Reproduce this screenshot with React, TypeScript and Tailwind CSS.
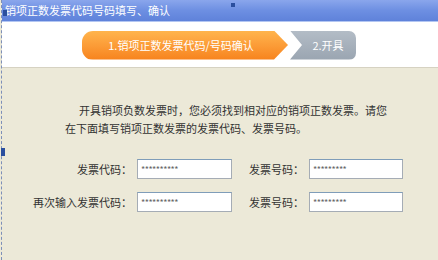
const font = { fontFamily: '"Noto Sans CJK SC", "Noto Sans", sans-serif' };

const Field = ({ label, value, labelW, inputW }: { label: string; value: string; labelW: string; inputW: string }) => (
  <div className="flex flex-row items-center">
    <label className={`${labelW} text-right text-[11px] text-[#333]`}>{label}</label>
    <div
      className={`${inputW} ml-[5px] h-[20px] bg-white border border-[#a5acb5] border-t-[#7f9db9] flex items-center pl-[3px] text-[9px] leading-none text-[#666] tracking-[-0.5px]`}
    >
      {value}
    </div>
  </div>
);

export default function App() {
  return (
    <div className="w-[438px] h-[260px] overflow-hidden bg-[#ece9d8]" style={font}>
      <div className="h-full ml-[1px] border-l border-dashed border-[#7d8fb8] flex flex-col">
        {/* title bar */}
        <div className="h-[22px] flex items-center pl-[3px] bg-gradient-to-b from-[#8aa6ec] via-[#6d8fe2] to-[#5f82da] border-b border-[#b3c6f2] relative">
          <span className="absolute left-[1px] top-[10px] w-[4px] h-[6px] bg-[#2b4f9e]" />
          <span className="absolute left-[229px] top-[3px] w-[4px] h-[4px] bg-[#2b4f9e]" />
          <span className="text-[11px] text-white leading-none">销项正数发票代码号码填写、确认</span>
        </div>

        {/* steps */}
        <div className="h-[46px] bg-white border-b border-[#d6d2c2] flex flex-row items-center pl-[80px] pt-[1px]">
          <div className="w-[206px] h-[29px] rounded-l-[11px] bg-gradient-to-b from-[#ffb44c] to-[#f7831c] flex items-center justify-center pr-[8px] text-[11px] text-white [clip-path:polygon(0_0,calc(100%-14px)_0,100%_50%,calc(100%-14px)_100%,0_100%)]">
            1.销项正数发票代码/号码确认
          </div>
          <div className="ml-[2px] w-[66px] h-[29px] rounded-r-[7px] bg-gradient-to-b from-[#b3bcc6] to-[#9aa5b1] flex items-center justify-center pl-[10px] text-[11px] text-white [clip-path:polygon(0_0,100%_0,100%_100%,0_100%,12px_50%)]">
            2.开具
          </div>
        </div>

        {/* body */}
        <div className="flex-1 relative">
          <span className="absolute -left-[1px] top-[80px] w-[4px] h-[8px] bg-[#2b4f9e]" />
          <p className="pt-[33px] pl-[63px] text-[11px] leading-[18px] text-[#333]">
            <span className="pl-[14px]">开具销项负数发票时，您必须找到相对应的销项正数发票。请您</span>
            <br />
            在下面填写销项正数发票的发票代码、发票号码。
          </p>
          <div className="mt-[22px] flex flex-col gap-[13px]">
            <div className="flex flex-row">
              <Field label="发票代码：" value="**********" labelW="w-[130px]" inputW="w-[95px]" />
              <Field label="发票号码：" value="*********" labelW="w-[72px]" inputW="w-[94px]" />
            </div>
            <div className="flex flex-row">
              <Field label="再次输入发票代码：" value="**********" labelW="w-[130px]" inputW="w-[95px]" />
              <Field label="发票号码：" value="*********" labelW="w-[72px]" inputW="w-[94px]" />
            </div>
          </div>
        </div>
      </div>
    </div>
  );
}
